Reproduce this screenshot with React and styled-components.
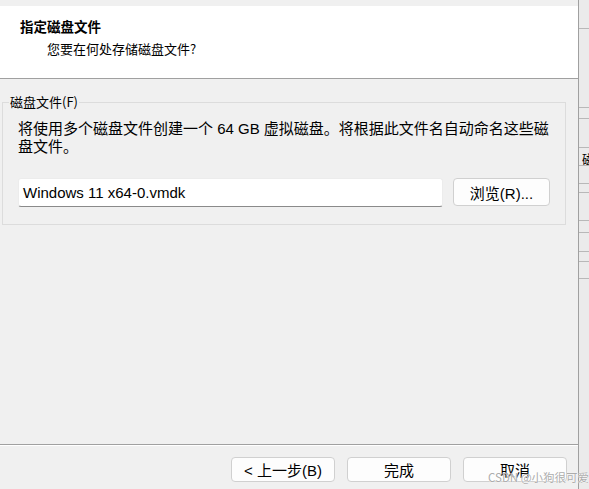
import React from "react";
import styled, { createGlobalStyle } from "styled-components";

const Global = createGlobalStyle`
  html, body { margin: 0; padding: 0; }
  body {
    background: #f0f0f0;
    font-family: "Liberation Sans", "Noto Sans CJK SC", sans-serif;
    color: #000;
    overflow: hidden;
  }
`;

const Screen = styled.div`
  position: relative;
  display: flex;
  width: 589px;
  height: 489px;
  overflow: hidden;
`;

const Dialog = styled.div`
  width: 578px;
  height: 489px;
  display: flex;
  flex-direction: column;
  background: #f0f0f0;
`;

const TopStrip = styled.div`
  height: 6px;
  flex: none;
  background: #f0f0f0;
`;

const Header = styled.div`
  height: 72px;
  flex: none;
  background: #fff;
  border-bottom: 1px solid #a0a0a0;
  box-sizing: content-box;
  display: flex;
  flex-direction: column;
`;

const Title = styled.div`
  margin: 12px 0 0 20px;
  font-family: "Noto Sans CJK SC", sans-serif;
  font-weight: 700;
  font-size: 13.5px;
  line-height: 16px;
`;

const Subtitle = styled.div`
  margin: 7px 0 0 47px;
  font-family: "Noto Sans CJK SC", sans-serif;
  font-size: 13px;
  line-height: 16px;
`;

const Body = styled.div`
  flex: 1;
  padding: 15px 12px 0 2px;
`;

const Group = styled.fieldset`
  margin: 0;
  padding: 0 15px 17px 15px;
  border: 1px solid #dcdcdc;
  min-width: 0;
`;

const Legend = styled.legend`
  margin-left: -9px;
  padding: 0 1px;
  font-family: "Noto Sans CJK SC", sans-serif;
  font-size: 13px;
  line-height: 16px;
`;

const Description = styled.p`
  margin: 10px 0 0;
  font-size: 15px;
  line-height: 18px;
  white-space: nowrap;
`;

const FileRow = styled.div`
  display: flex;
  gap: 10px;
  margin-top: 22px;
  align-items: flex-start;
`;

const PathInput = styled.div`
  flex: 1;
  height: 29px;
  box-sizing: border-box;
  background: #fff;
  border: 1px solid #ececec;
  border-bottom: 1px solid #8a8a8a;
  border-radius: 3px;
  padding: 0 4px;
  display: flex;
  align-items: center;
  font-size: 15px;
`;

const Button = styled.button`
  width: ${(p) => p.$w}px;
  height: ${(p) => p.$h}px;
  box-sizing: border-box;
  margin: 0;
  padding: 0;
  background: #fdfdfd;
  border: 1px solid #d0d0d0;
  border-radius: 4px;
  font-family: "Liberation Sans", "Noto Sans CJK SC", sans-serif;
  font-size: 15px;
  color: #000;
  display: flex;
  align-items: center;
  justify-content: center;
  flex: none;
`;

const Footer = styled.div`
  height: 45px;
  flex: none;
  box-sizing: border-box;
  border-top: 1px solid #a0a0a0;
  box-shadow: inset 0 1px 0 #ffffff;
  padding: 12px 11px 0 0;
  display: flex;
  justify-content: flex-end;
  align-items: flex-start;
  gap: 12px;
`;

const Strip = styled.div`
  flex: 1;
  border-left: 1px solid #a0a0a0;
  background: #ebebeb;
  display: flex;
  flex-direction: column;
  overflow: hidden;
`;

const StripCell = styled.div`
  height: ${(p) => p.$h}px;
  flex: none;
  box-sizing: border-box;
  border-bottom: 1px solid #b8b8b8;
  font-family: "Noto Sans CJK SC", sans-serif;
  font-size: 13px;
  line-height: 13px;
  padding: 4px 0 0 3px;
  white-space: nowrap;
  overflow: hidden;
`;

const StripRest = styled.div`
  flex: 1;
`;

const Watermark = styled.div`
  position: absolute;
  left: 488px;
  top: 469px;
  font-family: "Noto Sans CJK SC", sans-serif;
  font-size: 11.5px;
  line-height: 16px;
  color: rgba(150, 150, 150, 0.8);
  text-shadow: 0 0 1px #fff, 0 0 1px #fff;
  white-space: nowrap;
`;

const cells = [
  { h: 29 },
  { h: 79 },
  { h: 11 },
  { h: 29 },
  { h: 18, t: "磁" },
  { h: 18 },
  { h: 9 },
  { h: 28 },
  { h: 12 },
  { h: 19 },
  { h: 10 },
  { h: 17 },
];

export default function App() {
  return (
    <>
      <Global />
      <Screen>
        <Dialog>
          <TopStrip />
          <Header>
            <Title>指定磁盘文件</Title>
            <Subtitle>您要在何处存储磁盘文件?</Subtitle>
          </Header>
          <Body>
            <Group>
              <Legend>磁盘文件(F)</Legend>
              <Description>
                将使用多个磁盘文件创建一个 64 GB 虚拟磁盘。将根据此文件名自动命名这些磁
                <br />
                盘文件。
              </Description>
              <FileRow>
                <PathInput>Windows 11 x64-0.vmdk</PathInput>
                <Button $w={97} $h={28}>浏览(R)...</Button>
              </FileRow>
            </Group>
          </Body>
          <Footer>
            <Button $w={104} $h={25}>&lt; 上一步(B)</Button>
            <Button $w={104} $h={25}>完成</Button>
            <Button $w={104} $h={25}>取消</Button>
          </Footer>
        </Dialog>
        <Strip>
          {cells.map((c, i) => (
            <StripCell key={i} $h={c.h}>{c.t || ""}</StripCell>
          ))}
          <StripRest />
        </Strip>
        <Watermark>CSDN @小狗很可爱</Watermark>
      </Screen>
    </>
  );
}
